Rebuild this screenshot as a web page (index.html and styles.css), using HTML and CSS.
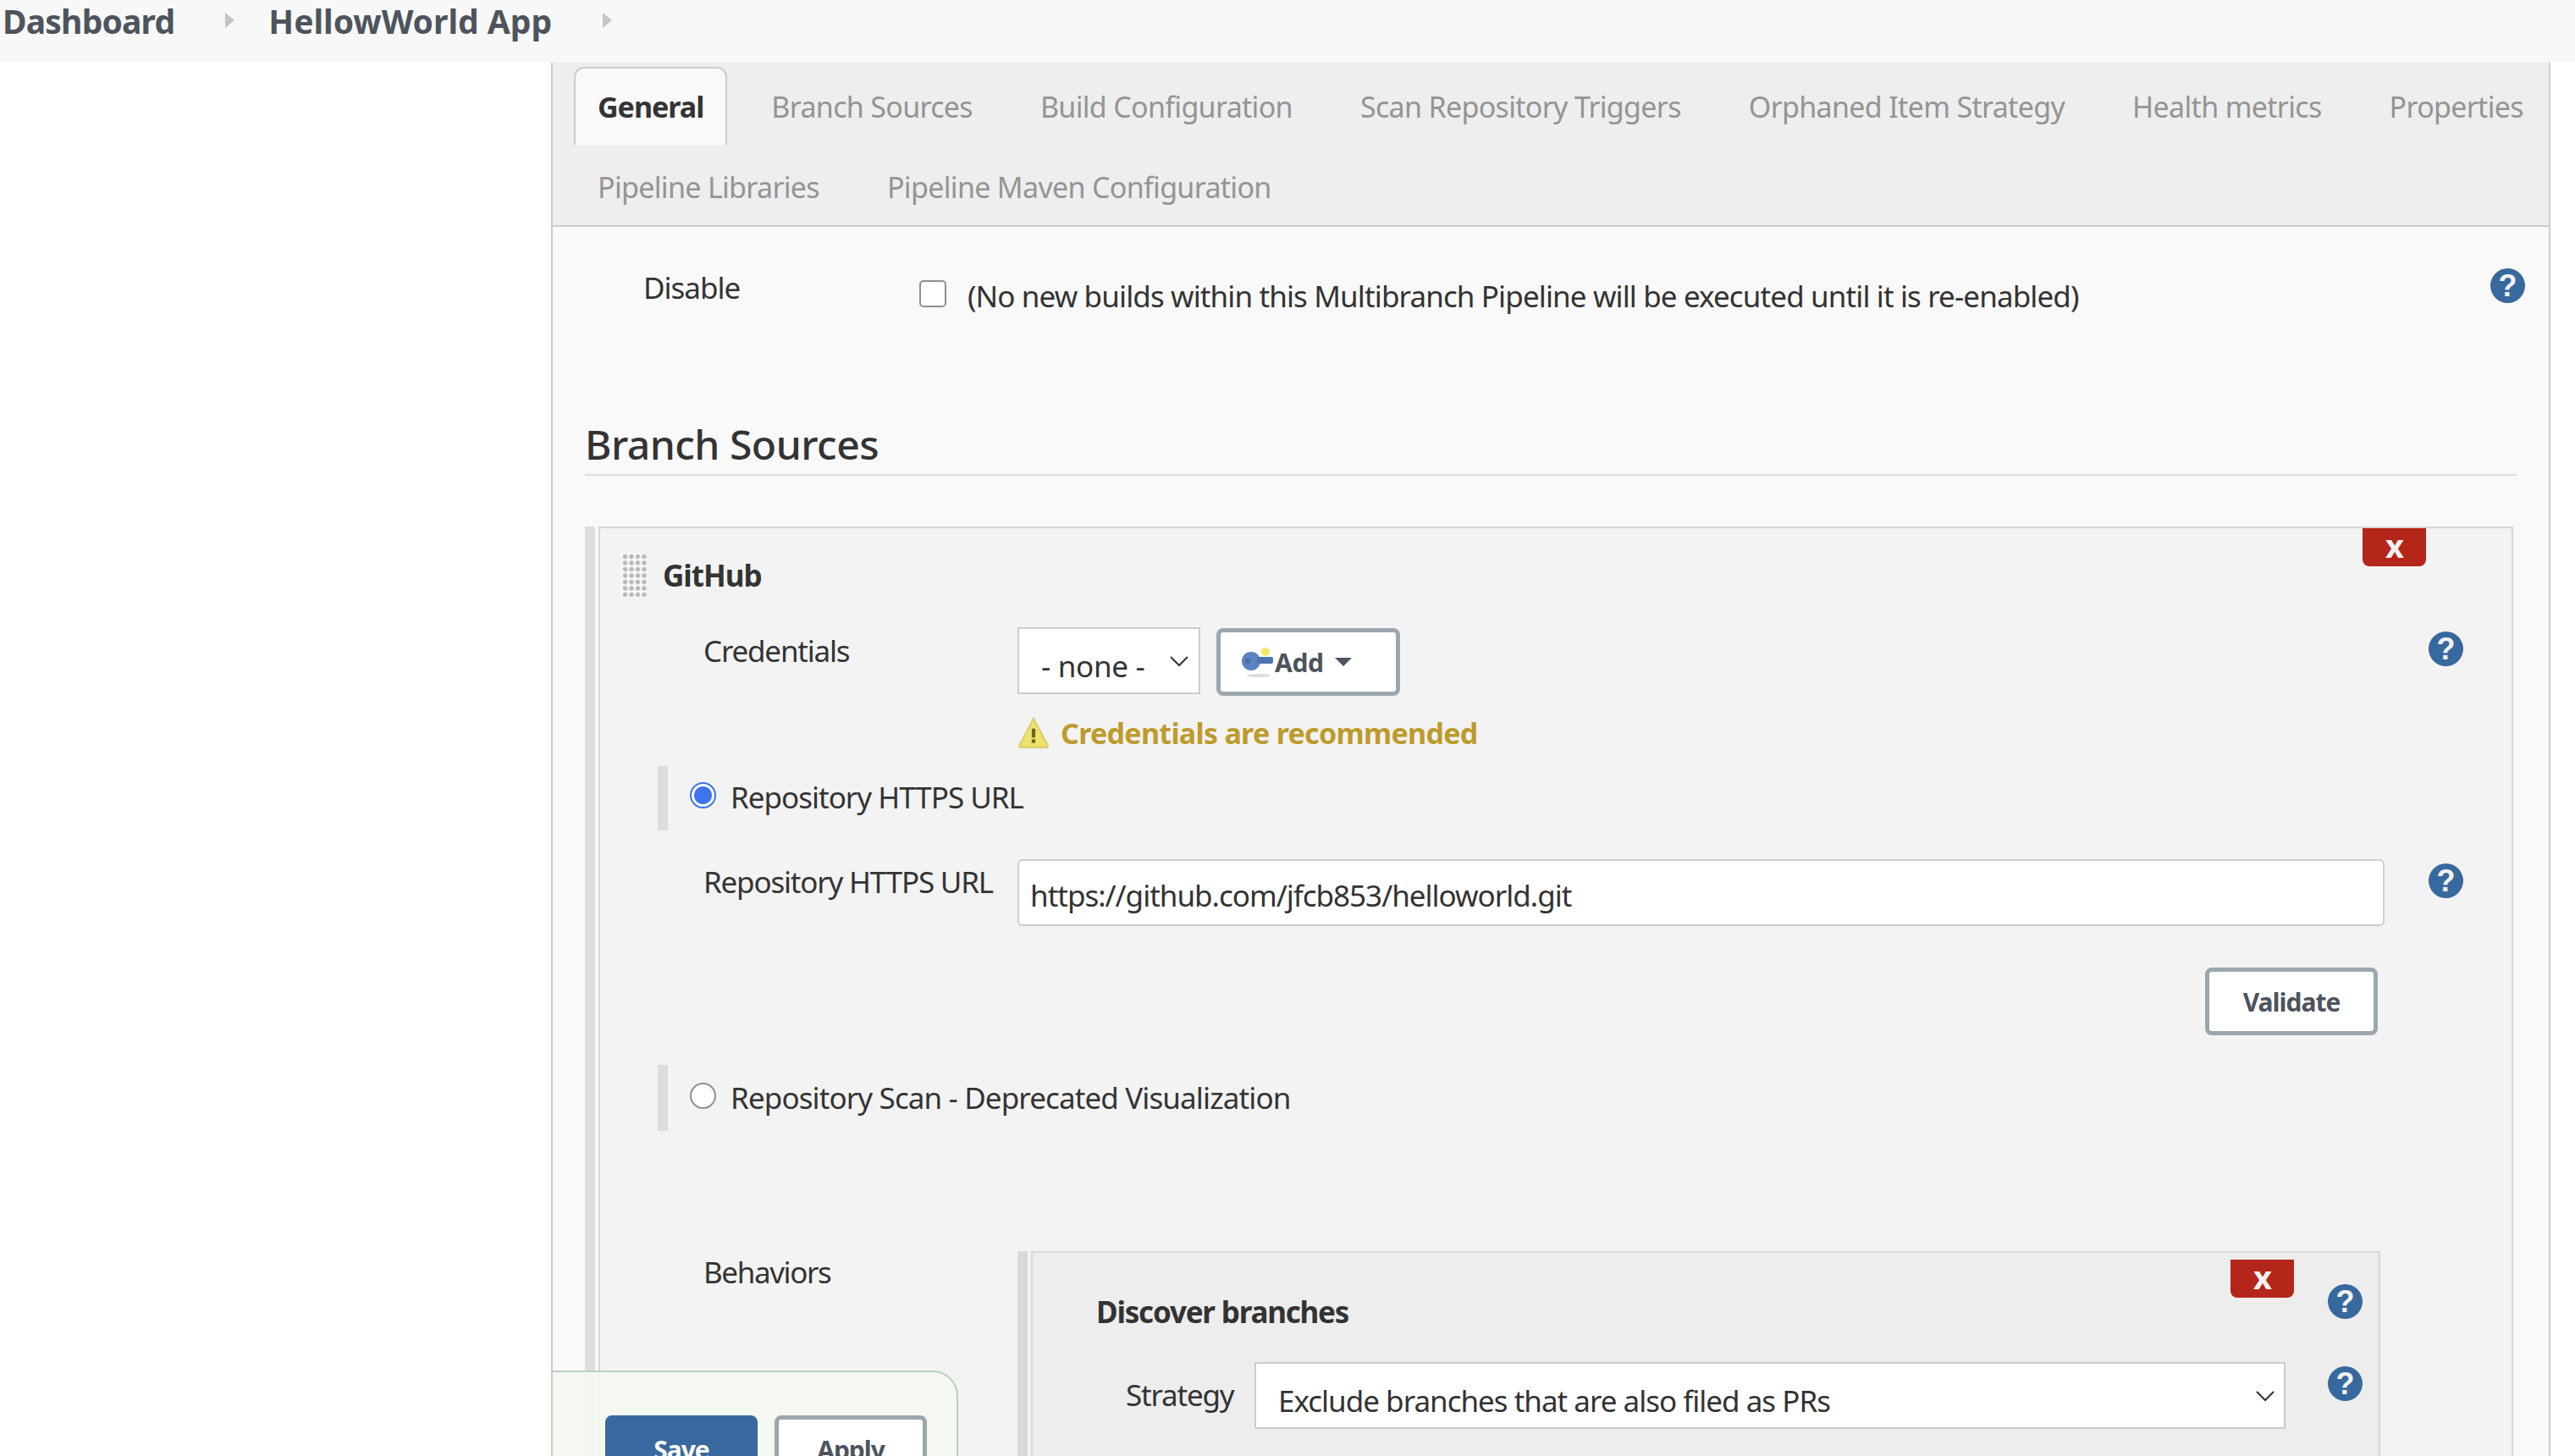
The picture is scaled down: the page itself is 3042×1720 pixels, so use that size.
FILE: index.html
```html
<!DOCTYPE html>
<html lang="en">
<head>
  <meta charset="UTF-8" />
  <title>HellowWorld App Config</title>
  <link rel="stylesheet" href="styles.css">
</head>
<body>

<header class="breadcrumbs">
  <a class="crumb crumb-first">Dashboard</a>
  <span class="crumb-arrow"></span>
  <a class="crumb crumb-app">HellowWorld App</a>
  <span class="crumb-arrow"></span>
</header>

<div class="page">
  <aside class="sidebar"></aside>

  <main class="main">
    <nav class="tabs">
      <a class="tab active">General</a>
      <a class="tab">Branch Sources</a>
      <a class="tab">Build Configuration</a>
      <a class="tab">Scan Repository Triggers</a>
      <a class="tab">Orphaned Item Strategy</a>
      <a class="tab">Health metrics</a>
      <a class="tab">Properties</a>
      <a class="tab">Pipeline Libraries</a>
      <a class="tab">Pipeline Maven Configuration</a>
    </nav>

    <div class="disable-row">
      <label class="disable-label">Disable</label>
      <input type="checkbox" class="check" />
      <span class="disable-text">(No new builds within this Multibranch Pipeline will be executed until it is re-enabled)</span>
      <span class="help">?</span>
    </div>

    <h2 class="section-title">Branch Sources</h2>

    <section class="repeat outer">
      <div class="repeat-box">
        <button class="remove">x</button>

        <div class="source-head">
          <span class="handle"></span>
          <strong>GitHub</strong>
        </div>

        <div class="row credentials-row">
          <label class="row-label">Credentials</label>
          <div class="select none-select">
            <span>- none -</span>
            <svg class="chevron" width="22" height="14" viewBox="0 0 22 14"><path d="M1 2l10 10L21 2" fill="none" stroke="#333" stroke-width="2"/></svg>
          </div>
          <button class="btn add-btn">
            <svg class="key" width="38" height="44" viewBox="0 0 38 44">
              <ellipse cx="20" cy="38" rx="14" ry="2" fill="#dddddd"/>
              <circle cx="28" cy="10" r="5" fill="#f1e96a"/>
              <circle cx="11" cy="21" r="11" fill="#5b83c0"/>
              <circle cx="7" cy="21" r="3" fill="#4a6ca5"/>
              <rect x="18" y="16" width="19" height="8" rx="2" fill="#4f74ad"/>
            </svg>
            <span>Add</span>
            <span class="caret"></span>
          </button>
          <span class="help">?</span>
        </div>

        <div class="warning">
          <svg class="warn-icon" width="38" height="38" viewBox="0 0 36 36">
            <path d="M18 2L34 32a1.500 1.500 0 0 1-1 2H3a1.500 1.500 0 0 1-1-2z" fill="#efe26a" stroke="#d9cf77" stroke-width="2"/>
            <rect x="16" y="13" width="4" height="10" fill="#6d6326"/>
            <rect x="16" y="25" width="4" height="4" fill="#6d6326"/>
          </svg>
          <span>Credentials are recommended</span>
        </div>

        <div class="radio-block">
          <input type="radio" name="repo" class="radio" checked />
          <span>Repository HTTPS URL</span>
        </div>

        <div class="row url-row">
          <label class="row-label">Repository HTTPS URL</label>
          <input class="text-input" type="text" value="https://github.com/jfcb853/helloworld.git" />
          <span class="help">?</span>
        </div>

        <div class="validate-row">
          <button class="btn validate-btn">Validate</button>
        </div>

        <div class="radio-block scan-block">
          <input type="radio" name="repo" class="radio" />
          <span>Repository Scan - Deprecated Visualization</span>
        </div>

        <div class="row behaviors-row">
          <label class="row-label behaviors-label">Behaviors</label>
          <div class="repeat inner">
            <div class="repeat-box inner-box">
              <button class="remove remove-inner">x</button>
              <div class="behavior-head">
                <strong>Discover branches</strong>
                <span class="help">?</span>
              </div>
              <div class="strategy-row">
                <label class="strategy-label">Strategy</label>
                <div class="select strategy-select">
                  <span>Exclude branches that are also filed as PRs</span>
                  <svg class="chevron" width="22" height="14" viewBox="0 0 22 14"><path d="M1 2l10 10L21 2" fill="none" stroke="#333" stroke-width="2"/></svg>
                </div>
                <span class="help">?</span>
              </div>
            </div>
          </div>
        </div>
      </div>
    </section>

    <div class="bottom-bar">
      <button class="btn save-btn">Save</button>
      <button class="btn apply-btn">Apply</button>
    </div>
  </main>
</div>

</body>
</html>
```

FILE: styles.css
```css
* {
  box-sizing: border-box;
}

html, body {
  margin: 0;
  padding: 0;
  height: 1720px;
  overflow: hidden;
  background-color: #ffffff;
}

body {
  font-family: "Noto Sans", "Open Sans", sans-serif;
  font-size: 35px;
  letter-spacing: -1px;
  line-height: 50px;
  color: #333333;
}

button, input {
  font-family: inherit;
  letter-spacing: inherit;
}

/* breadcrumbs */
.breadcrumbs {
  height: 74px;
  background-color: #f8f8f8;
  display: flex;
  align-items: flex-start;
  padding: 0 0 0 3px;
}

.crumb {
  font-size: 39px;
  font-weight: 700;
  letter-spacing: -0.8px;
  color: #4d545d;
}

.crumb-app {
  letter-spacing: 0;
}

.crumb-arrow {
  width: 0;
  height: 0;
  margin: 15px 40px 0 60px;
  border-left: 11px solid #c4c4c4;
  border-top: 9px solid transparent;
  border-bottom: 9px solid transparent;
}

/* page */
.page {
  display: flex;
  height: 1646px;
}

.sidebar {
  width: 651px;
  flex-shrink: 0;
}

.main {
  width: 2362px;
  position: relative;
  overflow: hidden;
  background-color: #f9f9f9;
  border-left: 2px solid #cccccc;
  border-right: 2px solid #cccccc;
}

/* tabs */
.tabs {
  height: 194px;
  display: flex;
  flex-wrap: wrap;
  align-content: flex-start;
  column-gap: 24px;
  padding: 5px 0 0 25px;
  background-color: #eeeeee;
  border-bottom: 2px solid #cccccc;
}

.tab {
  height: 92px;
  padding: 0 28px;
  font-size: 34px;
  letter-spacing: -0.68px;
  line-height: 95px;
  color: #949494;
}

.tab:nth-child(8), .tab:nth-child(9) {
  height: 95px;
  margin-top: 3px;
}

.tab.active {
  color: #333333;
  font-weight: 700;
  letter-spacing: -1px;
  background-color: #f9f9f9;
  border: 2px solid #cccccc;
  border-bottom: none;
  border-radius: 12px 12px 0 0;
  padding: 0 26px;
  line-height: 91px;
}

/* disable row */
.disable-row {
  display: flex;
  align-items: flex-start;
  margin-top: 47px;
  padding: 0 28px 0 107px;
}

.disable-label {
  width: 326px;
}

.check {
  appearance: none;
  width: 32px;
  height: 32px;
  margin: 16px 25px 0 0;
  background-color: #ffffff;
  border: 2px solid #8f8f8f;
  border-radius: 5px;
}

.disable-text {
  margin-top: 10px;
  letter-spacing: -0.88px;
}

.help {
  width: 41px;
  height: 41px;
  flex-shrink: 0;
  margin-left: auto;
  border-radius: 50%;
  background-color: #38699e;
  color: #f2f2f2;
  font-family: "Liberation Sans", sans-serif;
  font-size: 36px;
  font-weight: 700;
  line-height: 41px;
  letter-spacing: 0;
  text-align: center;
}

.disable-row .help {
  margin-top: 2px;
}

.section-title {
  margin: 115px 38px 0;
  height: 72px;
  font-size: 48px;
  font-weight: 500;
  line-height: 70px;
  letter-spacing: -0.5px;
  border-bottom: 2px solid #dddddd;
}

/* repeatable boxes */
.repeat {
  display: flex;
  padding-left: 4px;
  border-left: 12px solid #dddddd;
}

.outer {
  margin: 60px 42px 0 38px;
}

.repeat-box {
  position: relative;
  flex: 1;
  background-color: #f3f3f3;
  border: 2px solid #d7d7d7;
  padding-bottom: 300px;
}

.remove {
  position: absolute;
  top: 0;
  right: 101px;
  width: 75px;
  height: 45px;
  padding: 0 0 6px;
  border: none;
  border-radius: 0 0 8px 8px;
  background-color: #b4261a;
  color: #f2f2f2;
  font-size: 38px;
  font-weight: 700;
  line-height: 36px;
}

.source-head {
  display: flex;
  align-items: center;
  margin-top: 29px;
  padding-left: 25px;
  height: 52px;
  gap: 19px;
}

.source-head strong {
  margin-top: 2px;
}

.handle {
  width: 30px;
  height: 52px;
  background: radial-gradient(circle at 60% 60%, #b8b8b8 0 2px, transparent 3.5px) 0 0 / 7.5px 7.5px, #fafafa;
}

.row {
  display: flex;
  align-items: flex-start;
  padding: 0 57px 0 122px;
}

.row-label {
  width: 371px;
  flex-shrink: 0;
  letter-spacing: -1.2px;
}

.credentials-row {
  margin-top: 36px;
}

.credentials-row .row-label {
  margin-top: 3px;
}

.credentials-row .help {
  margin-top: 5px;
}

.select {
  display: flex;
  justify-content: space-between;
  background-color: #ffffff;
  border: 2px solid #cccccc;
}

.none-select {
  width: 216px;
  height: 79px;
  padding: 19px 12px 0 26px;
  letter-spacing: -0.3px;
}

.chevron {
  margin-top: 12px;
}

.btn {
  background-color: #ffffff;
  border: 5px solid #9ba7af;
  border-radius: 8px;
  color: #4d545d;
  font-size: 30px;
  font-weight: 700;
  padding: 0;
}

.add-btn {
  display: flex;
  align-items: center;
  width: 217px;
  height: 80px;
  margin: 1px 0 0 19px;
  padding-left: 25px;
  letter-spacing: -0.3px;
}

.key {
  margin-right: 1px;
}

.caret {
  width: 0;
  height: 0;
  margin-left: 13px;
  border-top: 10px solid #4d545d;
  border-left: 10px solid transparent;
  border-right: 10px solid transparent;
}

.warning {
  display: flex;
  align-items: center;
  gap: 13px;
  height: 40px;
  margin: 24px 0 0 493px;
  color: #bd9b2c;
  font-size: 34px;
  font-weight: 700;
  letter-spacing: -0.7px;
}

.radio-block {
  display: flex;
  align-items: center;
  height: 76px;
  margin: 19px 0 0 68px;
  padding: 0 0 2px 26px;
  gap: 17px;
  border-left: 12px solid #dddddd;
}

.radio {
  appearance: none;
  width: 31px;
  height: 31px;
  margin: -5px 0 0;
  background-color: #ffffff;
  border: 2px solid #8f8f8f;
  border-radius: 50%;
}

.radio:checked {
  border-color: #3f74f0;
  background: radial-gradient(circle, #3f74f0 0 10px, #ffffff 11px);
}

.url-row {
  margin-top: 34px;
}

.url-row .row-label {
  margin-top: 2px;
}

.url-row .help {
  margin-top: 5px;
}

.text-input {
  width: 1615px;
  height: 79px;
  padding: 5px 13px 0;
  background-color: #ffffff;
  border: 2px solid #cccccc;
  border-radius: 6px;
  color: #333333;
  font-size: 35px;
  outline: none;
}

.validate-row {
  display: flex;
  justify-content: flex-end;
  margin-top: 49px;
  padding-right: 158px;
}

.validate-btn {
  width: 204px;
  height: 80px;
}

.scan-block {
  margin-top: 35px;
  height: 78px;
  padding-bottom: 0;
  letter-spacing: -0.88px;
}

.behaviors-row {
  margin-top: 142px;
  padding-right: 0;
}

.behaviors-label {
  margin-top: 0;
  letter-spacing: -1.4px;
}

.inner {
  width: 1610px;
  border-left-color: #d9d9d9;
}

.inner-box {
  background-color: #ededed;
}

.remove-inner {
  top: 8px;
  right: 100px;
}

.behavior-head {
  display: flex;
  align-items: flex-start;
  margin-top: 37px;
  padding: 0 19px 0 75px;
  letter-spacing: -1.2px;
}

.behavior-head strong {
  margin-top: 8px;
}

.strategy-row {
  display: flex;
  align-items: flex-start;
  margin-top: 34px;
  padding: 0 19px 0 110px;
}

.strategy-label {
  width: 152px;
  margin-top: 14px;
  letter-spacing: -1.2px;
}

.strategy-select {
  width: 1218px;
  height: 79px;
  padding: 19px 11px 0 26px;
}

.strategy-row .help {
  margin-top: 5px;
}

/* save / apply bar */
.bottom-bar {
  position: absolute;
  left: -2px;
  top: 1545px;
  width: 481px;
  height: 200px;
  display: flex;
  align-items: flex-start;
  gap: 20px;
  padding: 51px 0 0 62px;
  background-color: rgba(245, 249, 241, 0.92);
  border: 2px solid #b8d0c0;
  border-radius: 0 30px 0 0;
}

.save-btn, .apply-btn {
  width: 180px;
  height: 80px;
}

.save-btn {
  background-color: #38699e;
  border-color: #38699e;
  color: #ffffff;
}
```
